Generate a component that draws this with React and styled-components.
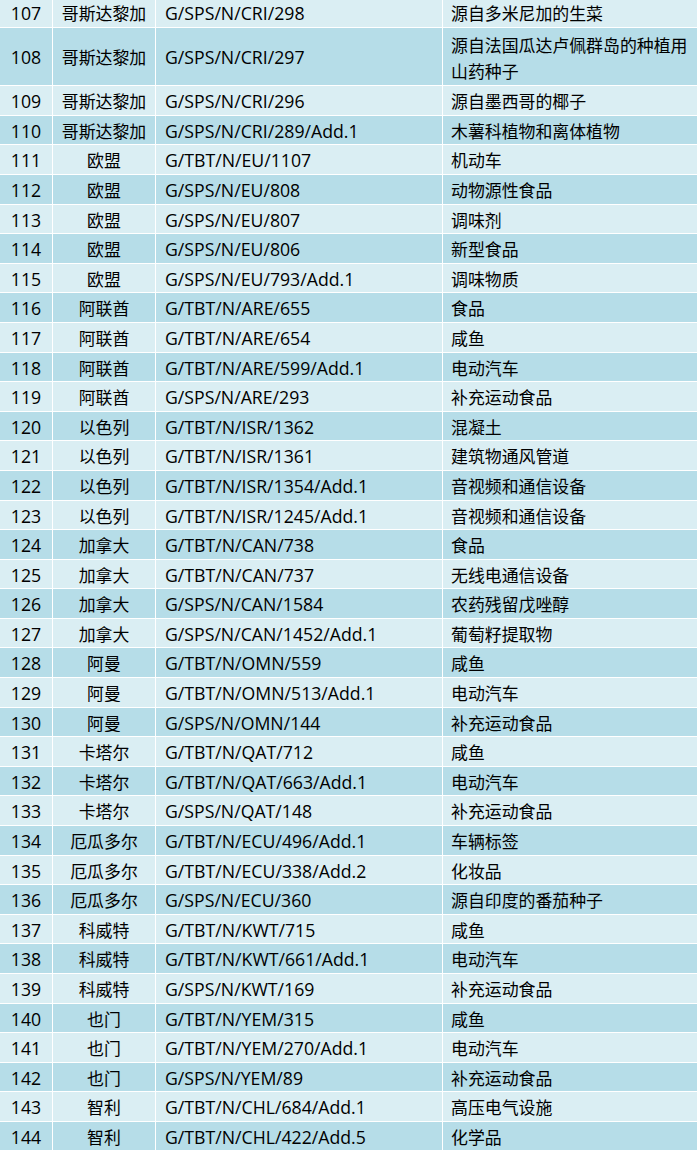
import styled, { createGlobalStyle } from "styled-components";

const GlobalStyle = createGlobalStyle`
  html, body {
    margin: 0;
    padding: 0;
    background: #ffffff;
  }
  body {
    font-family: "Open Sans", "Noto Sans CJK SC", sans-serif;
    color: #000;
  }
`;

const rows = [
  ["107", "哥斯达黎加", "G/SPS/N/CRI/298", "源自多米尼加的生菜"],
  ["108", "哥斯达黎加", "G/SPS/N/CRI/297", "源自法国瓜达卢佩群岛的种植用山药种子"],
  ["109", "哥斯达黎加", "G/SPS/N/CRI/296", "源自墨西哥的椰子"],
  ["110", "哥斯达黎加", "G/SPS/N/CRI/289/Add.1", "木薯科植物和离体植物"],
  ["111", "欧盟", "G/TBT/N/EU/1107", "机动车"],
  ["112", "欧盟", "G/SPS/N/EU/808", "动物源性食品"],
  ["113", "欧盟", "G/SPS/N/EU/807", "调味剂"],
  ["114", "欧盟", "G/SPS/N/EU/806", "新型食品"],
  ["115", "欧盟", "G/SPS/N/EU/793/Add.1", "调味物质"],
  ["116", "阿联酋", "G/TBT/N/ARE/655", "食品"],
  ["117", "阿联酋", "G/TBT/N/ARE/654", "咸鱼"],
  ["118", "阿联酋", "G/TBT/N/ARE/599/Add.1", "电动汽车"],
  ["119", "阿联酋", "G/SPS/N/ARE/293", "补充运动食品"],
  ["120", "以色列", "G/TBT/N/ISR/1362", "混凝土"],
  ["121", "以色列", "G/TBT/N/ISR/1361", "建筑物通风管道"],
  ["122", "以色列", "G/TBT/N/ISR/1354/Add.1", "音视频和通信设备"],
  ["123", "以色列", "G/TBT/N/ISR/1245/Add.1", "音视频和通信设备"],
  ["124", "加拿大", "G/TBT/N/CAN/738", "食品"],
  ["125", "加拿大", "G/TBT/N/CAN/737", "无线电通信设备"],
  ["126", "加拿大", "G/SPS/N/CAN/1584", "农药残留戊唑醇"],
  ["127", "加拿大", "G/SPS/N/CAN/1452/Add.1", "葡萄籽提取物"],
  ["128", "阿曼", "G/TBT/N/OMN/559", "咸鱼"],
  ["129", "阿曼", "G/TBT/N/OMN/513/Add.1", "电动汽车"],
  ["130", "阿曼", "G/SPS/N/OMN/144", "补充运动食品"],
  ["131", "卡塔尔", "G/TBT/N/QAT/712", "咸鱼"],
  ["132", "卡塔尔", "G/TBT/N/QAT/663/Add.1", "电动汽车"],
  ["133", "卡塔尔", "G/SPS/N/QAT/148", "补充运动食品"],
  ["134", "厄瓜多尔", "G/TBT/N/ECU/496/Add.1", "车辆标签"],
  ["135", "厄瓜多尔", "G/TBT/N/ECU/338/Add.2", "化妆品"],
  ["136", "厄瓜多尔", "G/SPS/N/ECU/360", "源自印度的番茄种子"],
  ["137", "科威特", "G/TBT/N/KWT/715", "咸鱼"],
  ["138", "科威特", "G/TBT/N/KWT/661/Add.1", "电动汽车"],
  ["139", "科威特", "G/SPS/N/KWT/169", "补充运动食品"],
  ["140", "也门", "G/TBT/N/YEM/315", "咸鱼"],
  ["141", "也门", "G/TBT/N/YEM/270/Add.1", "电动汽车"],
  ["142", "也门", "G/SPS/N/YEM/89", "补充运动食品"],
  ["143", "智利", "G/TBT/N/CHL/684/Add.1", "高压电气设施"],
  ["144", "智利", "G/TBT/N/CHL/422/Add.5", "化学品"],
];

// rows sit edge to edge, the white gaps are the cell borders
const Table = styled.div`
  display: flex;
  flex-direction: column;
  gap: 1px;
  margin-top: -1.6px;
  background: #ffffff;
`;

const Row = styled.div`
  display: grid;
  grid-template-columns: 52px 102px 286px 1fr;
  column-gap: 1px;
`;

const Cell = styled.div`
  box-sizing: border-box;
  display: flex;
  align-items: center;
  justify-content: ${(p) => (p.$center ? "center" : "flex-start")};
  min-height: 28.6px;
  padding: 3px 0 0 ${(p) => (p.$center ? "0" : p.$pad || "8px")};
  background: ${(p) => (p.$dark ? "#b6dde8" : "#daeef3")};
  font-size: ${(p) => (p.$latin ? "17.7px" : "16.9px")};
  line-height: 25.6px;
  white-space: nowrap;
`;

const DescCell = styled(Cell)`
  white-space: normal;
  line-height: ${(p) => (p.$wrapped ? "26px" : "25.6px")};
  padding: ${(p) => (p.$wrapped ? "4.6px 0 0.6px 8px" : "3px 0 0 8px")};
`;

const App = () => {
  return (
    <>
      <GlobalStyle />
      <Table>
        {rows.map(([num, country, code, desc]) => {
          const dark = Number(num) % 2 === 0;
          return (
            <Row key={num}>
              <Cell $dark={dark} $center $latin>{num}</Cell>
              <Cell $dark={dark} $center>{country}</Cell>
              <Cell $dark={dark} $pad="9px" $latin>{code}</Cell>
              <DescCell $dark={dark} $wrapped={desc.length > 14}>{desc}</DescCell>
            </Row>
          );
        })}
      </Table>
    </>
  );
};

export default App;
